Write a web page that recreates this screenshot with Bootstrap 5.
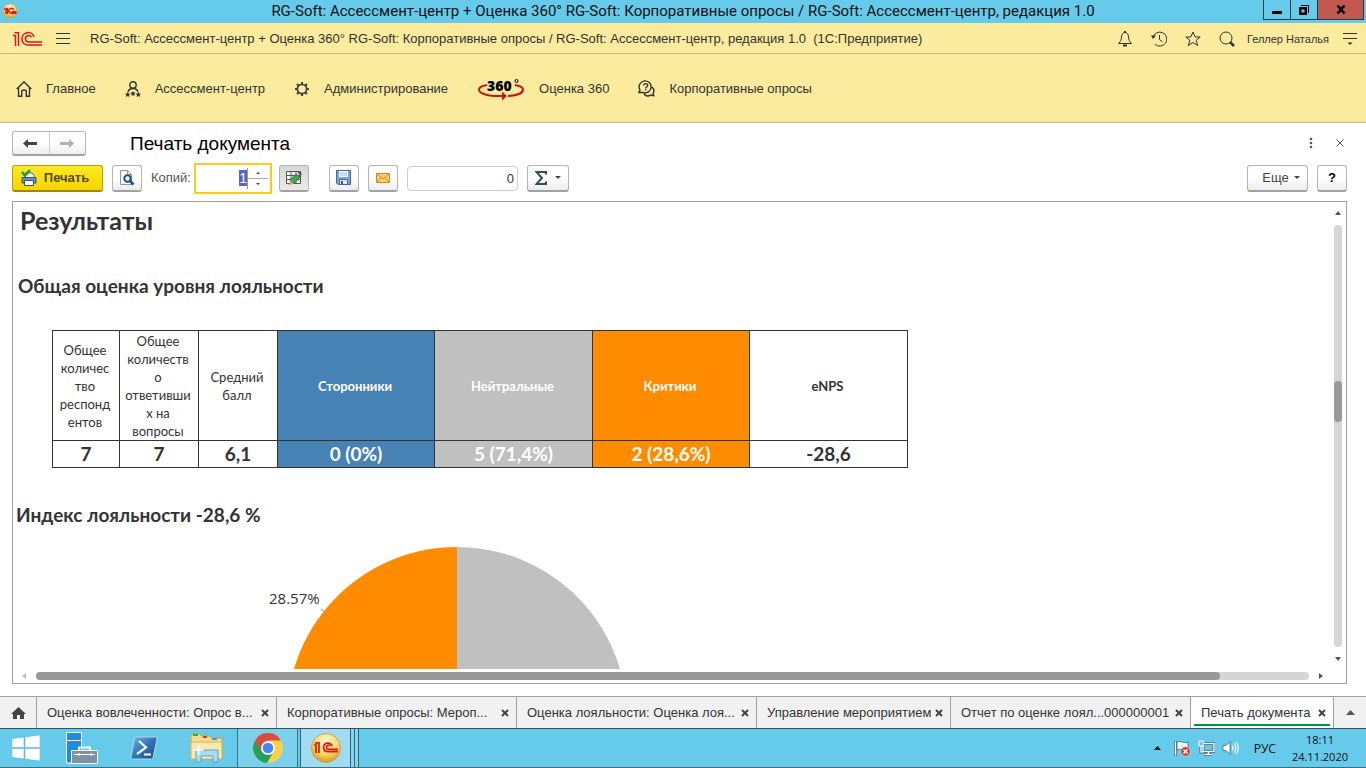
<!DOCTYPE html>
<html lang="ru">
<head>
<meta charset="utf-8">
<meta name="viewport" content="width=device-width, initial-scale=1">
<title>Печать документа</title>
<link href="https://cdn.jsdelivr.net/npm/bootstrap@5.3.0/dist/css/bootstrap.min.css" rel="stylesheet">
<style>
  body { font-family: "Liberation Sans", Arial, sans-serif; font-size: 13px; line-height: 16px; color: #333; background: #fff; }
  button { font: inherit; color: inherit; }
  svg { display: block; flex: none; }
  .plain { border: 0; background: none; padding: 0; }
  a { color: inherit; text-decoration: none; }

  .win-title { height: 23px; background: #66caea; color: #111; }
  .win-title h1 { font: 15px/23px Roboto, sans-serif; padding-left: 84px; }
  .win-ctl { height: 20px; margin-right: 2px; }
  .win-ctl button { border: 1px solid #1f3d47; border-top: 0; border-right: 0; background: none; padding: 0; width: 27px; display: flex; align-items: center; justify-content: center; }
  .win-ctl .close-win { width: 47px; background: #c35850; border-right: 1px solid #1f3d47; }

  .app-bar { height: 31px; background: #faeb9e; border-bottom: 1px solid #c8b972; padding: 1px 8px 0 13px; }
  .app-icons { gap: 18px; }
  .menu-btn { margin: 0 20px 0 13px; }
  .app-name { white-space: pre; }
  .user-name { font-size: 11px; margin: 0 13px 0 12px; }
  .sections { height: 69px; background: #faeb9e; border-bottom: 1px solid #c8b972; padding: 1px 16px 0; gap: 29px; }
  .sections a { display: flex; align-items: center; gap: 14px; }

  .form-head { padding: 8px 19px 0 12px; height: 34px; }
  .form-head h2 { font-size: 19px; line-height: 26px; color: #000; margin: 0 0 0 44px; }
  .form-tools { gap: 23px; padding: 6px 3px 0 0; }
  .btn-1c { height: 27px; min-width: 30px; padding: 0; border: 1px solid #b4b4b4; border-bottom: 2px solid #a2a2a2; border-radius: 3px; background: linear-gradient(#fff 50%, #ececec); display: flex; align-items: center; justify-content: center; color: #444; }
  .btn-print { width: 91px; gap: 7px; padding-right: 5px; border-color: #b89f00; border-bottom-color: #9d8800; background: linear-gradient(#ffe921, #f3d500); font-weight: bold; color: #54472a; }
  .btn-on { background: linear-gradient(#d6d6d6, #ebebeb); }
  .btn-sum { width: 42px; gap: 8px; }
  .btn-more { width: 61px; gap: 5px; padding-left: 7px; }
  .nav-pair { border: 1px solid #b4b4b4; border-bottom: 2px solid #a2a2a2; border-radius: 3px; height: 25px; width: 74px; background: linear-gradient(#fff 50%, #eee); display: flex; }
  .nav-pair button + button { border-left: 1px solid #ccc; }

  .tools { padding: 0 19px 2px 12px; height: 44px; }
  .tools > * { margin-right: 9px; }
  .tools > .last { margin-right: 0; }
  .tools > label { margin-right: 3px; color: #555; }
  .tools > .copies { width: 78px; height: 31px; border: 2px solid #fccb1f; padding-right: 2px; margin-right: 7px; }
  .copies input { border: 0; outline: 0; width: 51px; height: 27px; padding: 0; text-align: right; font-size: 14px; }
  .copies input::selection { background: #5469bd; color: #fff; }
  .spin { width: 21px; border-left: 1px solid #999; height: 21px; }
  .spin button { height: 10px; display: flex; align-items: center; justify-content: center; }
  .spin button:first-child { border-bottom: 1px solid #aaa; height: 11px; }
  .sum-box { width: 111px; height: 25px; border: 1px solid #ccc; border-radius: 4px; padding: 0 3px; text-align: right; color: #333; }
  .tools > .gap-wide { margin-right: 20px; }

  .sheet { border: 1px solid #a0a0a0; margin: 0 19px 12px 12px; min-height: 0; }
  .sheet-row { min-height: 0; }
  .sheet-body { min-width: 0; min-height: 0; overflow: hidden; font-family: Lato, Carlito, Calibri, sans-serif; }
  .sheet-body h3, .sheet-body h4 { font-weight: bold; color: #333; margin: 0; }
  .sheet-body h3 { font-size: 25px; line-height: 36px; padding-left: 7px; }
  .sheet-body h4 { font-size: 19px; line-height: 24px; }
  .h-total { padding: 36px 0 32px 5px; }
  .h-index { padding: 35px 0 20px 3px; }
  .nps { width: 856px; margin-left: 39px; table-layout: fixed; border-collapse: collapse; text-align: center; color: #333; }
  .nps th, .nps td { border: 1px solid #333; padding: 0; vertical-align: middle; }
  .nps th { height: 110px; font-size: 13px; line-height: 18px; padding-right: 2px; }
  .nps th.thin { font-weight: normal; }
  .nps td { height: 27px; font-size: 19px; line-height: 26px; font-weight: bold; }
  .nps .promo { background: #4682b4; color: #fff; }
  .nps .neutral { background: #c0c0c0; color: #fff; }
  .nps .critic { background: #ff8c00; color: #fff; }
  .c-first { width: 67px; }
  .c-thin { width: 79px; }
  .c-odd { width: 157px; }
  .c-even { width: 158px; }
  .pie { padding-left: 252px; }
  .pie text { font: 15px "Open Sans", sans-serif; fill: #333; }

  .vbar { width: 14px; padding: 9px 3px 0 0; }
  .hbar { height: 14px; padding: 3px 23px 0 9px; gap: 10px; }
  .track { background: #d5d5d5; border-radius: 4px; }
  .thumb { background: #999; border-radius: 4px; }
  .vbar .track { width: 8px; margin: 10px 0; }
  .vbar .thumb { height: 41px; }
  .hbar .track, .hbar .thumb { height: 8px; }

  .tabs { height: 32px; background: #f1f1f1; border-top: 1px solid #a0a0a0; }
  .tab, .tab-home { border-right: 1px solid #a0a0a0; }
  .tab { padding: 0 7px 0 10px; white-space: nowrap; min-width: 0; }
  .tab a { overflow: hidden; }
  .tab-wide { flex: 0 1 240px; }
  .tab-mid { flex: 0 1 194px; }
  .tab-home { width: 37px; }
  .tab-on { background: #fff; flex: 0 1 143px; }
  .tab-on::after { content: ""; position: absolute; left: 3px; right: 3px; bottom: 2px; height: 2px; background: #009646; }

  .taskbar { height: 40px; background: #66caea; border-top: 1px solid #3d4f56; border-bottom: 1px solid #3d6c7c; color: #111; }
  .taskbar .slot { width: 62px; display: flex; align-items: center; justify-content: center; }
  .taskbar .start { width: 51px; }
  .taskbar .run { width: 61px; border: solid #3b7488; border-width: 0 1px; background: #7bd1ec; margin-right: 2px; }
  .taskbar .act { width: 51px; border: solid #2e6375; border-width: 0 1px; background: #9fdcf1; }
  .stack { width: 4px; border-right: 1px solid #2e6375; background: #8ad5ee; }
  .tray { font: 11px/17px "Open Sans", sans-serif; padding-right: 18px; }
  .tray-icons { gap: 7px; margin-left: 13px; }
  .tray .lang { font-size: 12px; margin: 0 16px 0 15px; }
</style>
</head>
<body class="vh-100 d-flex flex-column overflow-hidden">

<header class="win-title d-flex flex-shrink-0">
  <svg width="19" height="22" viewBox="0 0 19 22"><defs><radialGradient id="gold" cx=".5" cy=".3" r=".7"><stop offset="0" stop-color="#fffbe0"/><stop offset=".6" stop-color="#fbd866"/><stop offset="1" stop-color="#d99720"/></radialGradient></defs><circle cx="10" cy="11" r="7" fill="url(#gold)" stroke="#c8a56a" stroke-width=".6"/><path d="M4 9.200h2V14M5.500 8.500h2V14M16.500 13.300h-5a2.500 2.500 0 1 1 2.300-3.300M16.500 11.800h-5" fill="none" stroke="#e3170d" stroke-width="1.400"/></svg>
  <h1 class="flex-fill text-center mb-0 text-truncate">RG-Soft: Ассессмент-центр + Оценка 360° RG-Soft: Корпоративные опросы / RG-Soft: Ассессмент-центр, редакция 1.0</h1>
  <div class="win-ctl d-flex">
    <button aria-label="Свернуть"><svg width="10" height="10"><path d="M0 6h10v3H0z"/></svg></button>
    <button aria-label="Восстановить"><svg width="10" height="10" fill="none" stroke="#000"><path d="M1.200 3.200h5.600v5.600H1.200z" stroke-width="2.400"/><path d="M2 .5h7.500V8"/></svg></button>
    <button class="close-win" aria-label="Закрыть"><svg width="10" height="9" viewBox="0 0 10 9"><path d="M1.500.5l7 8M8.500.5l-7 8" stroke="#000" stroke-width="2.600"/></svg></button>
  </div>
</header>

<div class="app-bar d-flex align-items-center flex-shrink-0">
  <svg width="30" height="16" viewBox="0 0 30 16" fill="none" stroke="#d61a1a" stroke-width="1.500"><path d="M0 4.500h2.500V15M1.500 1.700h4V15M29 14H15a6.200 6.200 0 1 1 6-8M29 11H15.500a3.200 3.200 0 1 1 3-4.500"/></svg>
  <button class="plain menu-btn" aria-label="Меню"><svg width="14" height="12" stroke="#333"><path d="M0 .5h14M0 5.500h14M0 10.500h14"/></svg></button>
  <span class="app-name flex-fill text-truncate">RG-Soft: Ассессмент-центр + Оценка 360° RG-Soft: Корпоративные опросы / RG-Soft: Ассессмент-центр, редакция 1.0  (1С:Предприятие)</span>
  <div class="app-icons d-flex align-items-center">
    <button class="plain" aria-label="Оповещения"><svg width="16" height="16" viewBox="0 0 16 16" fill="none" stroke="#333"><path d="M8 1.500c-2.200 0-3.300 1.500-3.500 4.500C4.300 9 3.500 10.500 1.500 12.500h13c-2-2-2.800-3.500-3-6.500C11.300 3 10.200 1.500 8 1.500z"/><path d="M6 14.500h4M7 1h2" stroke-width="2"/></svg></button>
    <button class="plain" aria-label="История"><svg width="16" height="16" viewBox="0 0 16 16" fill="none" stroke="#333"><path d="M2 6.500A7 7 0 1 1 4 13.200M8.500 4v4.500l3 2.500"/><path d="M0 4.500h5L2 8z" fill="#333" stroke="none"/></svg></button>
    <button class="plain" aria-label="Избранное"><svg width="16" height="16" viewBox="0 0 16 16" fill="none" stroke="#333"><path d="M8 1l2.200 5h5l-4 3.300 1.500 5.200L8 11.500l-4.700 3 1.500-5.200L.8 6h5z"/></svg></button>
    <button class="plain" aria-label="Поиск"><svg width="16" height="16" viewBox="0 0 16 16" fill="none" stroke="#333"><circle cx="7" cy="7" r="6"/><path d="M11 11l4 4" stroke-width="2.500"/></svg></button>
  </div>
  <a href="#" class="user-name">Геллер Наталья</a>
  <button class="plain" aria-label="Сервис"><svg width="16" height="15" viewBox="0 0 16 15" stroke="#333"><path d="M1 2.500h14M1 7.500h14"/><path d="M5.500 11.500h5L8 14z" fill="#333" stroke="none"/></svg></button>
</div>

<nav class="sections d-flex align-items-center flex-shrink-0">
  <a href="#"><svg width="16" height="16" viewBox="0 0 16 16" fill="none" stroke="#333" stroke-width="1.400"><path d="M.7 8L8 .9 15.300 8M2.500 6.500v8.800h3.200V10.500q0-1.500 2.300-1.500t2.300 1.500v4.800h3.200V6.500"/></svg>Главное</a>
  <a href="#"><svg width="16" height="16" viewBox="0 0 16 16" fill="none" stroke="#333" stroke-width="1.400"><circle cx="8" cy="4" r="3.200"/><path d="M3 11c.5-2.500 2.200-3.500 5-3.500s4.500 1 5 3.500"/><path id="st" d="M2.700 11l.8 1.600h1.900L4 13.900l.5 2-1.800-1-1.800 1 .5-2L0 12.600h1.900z" fill="#333" stroke="none"/><use href="#st" x="5.300" y="-1"/><use href="#st" x="10.600"/></svg>Ассессмент-центр</a>
  <a href="#"><svg width="16" height="16" viewBox="0 0 16 16" fill="none" stroke="#444"><circle cx="8" cy="8" r="4.600" stroke-width="1.800"/><path d="M8 1v2.500M8 12.500V15M1 8h2.500M12.500 8H15M3 3l2 2M11 11l2 2M3 13l2-2M11 5l2-2" stroke-width="2"/></svg>Администрирование</a>
  <a href="#"><svg width="48" height="24" viewBox="0 0 48 24"><path d="M10 8C4 9 2 10 2 12.500c0 4 9 7 24 6.500M38 8c6 1 8 2.500 8 4.500 0 3.500-6 6-15 6.500" fill="none" stroke="#c81414" stroke-width="2"/><path d="M25 14.500l5 4.500-5 4.500z" fill="#c81414"/><text x="10" y="14" font-family="Open Sans, sans-serif" font-weight="800" font-size="14" fill="#000">360</text><circle cx="39.500" cy="4" r="1.500" fill="none" stroke="#000"/></svg>Оценка 360</a>
  <a href="#"><svg width="17" height="17" viewBox="0 0 17 17" fill="none" stroke="#333" stroke-width="1.400"><path d="M1 12.500l1-2.500A6 6 0 1 1 5 12.500zM14 7c2 2 2.500 4.500 1 6.500l.8 2.200-3-.5C10 16.500 7.500 16 6 14"/><path d="M5.700 5.500c0-2.500 4-2.500 4 0 0 1.500-2 1.500-2 3M7.700 9.300v1.200"/></svg>Корпоративные опросы</a>
</nav>

<div class="form-head d-flex align-items-start flex-shrink-0">
  <div class="nav-pair">
    <button class="plain flex-fill d-flex align-items-center justify-content-center" aria-label="Назад"><svg width="15" height="9" viewBox="0 0 15 9"><path d="M0 4.500L5 0v3h9v3H5v3z" fill="#444"/></svg></button>
    <button class="plain flex-fill d-flex align-items-center justify-content-center" aria-label="Вперед"><svg width="15" height="9" viewBox="0 0 15 9"><path d="M14 4.500L9 0v3H0v3h9v3z" fill="#b0b0b0"/></svg></button>
  </div>
  <h2>Печать документа</h2>
  <div class="form-tools ms-auto d-flex align-items-center">
    <button class="plain" aria-label="Действия"><svg width="4" height="12" fill="#555"><circle cx="2" cy="2" r="1.300"/><circle cx="2" cy="6" r="1.300"/><circle cx="2" cy="10" r="1.300"/></svg></button>
    <button class="plain" aria-label="Закрыть"><svg width="8" height="8" viewBox="0 0 8 8" stroke="#555"><path d="M.5.5l7 7M7.500.5l-7 7"/></svg></button>
  </div>
</div>

<div class="tools d-flex align-items-center flex-shrink-0">
  <button class="btn-1c btn-print"><svg width="16" height="17" viewBox="0 0 16 17"><path d="M4 6V4h7l2 2v3H4z" fill="#fff" stroke="#47647e"/><path d="M1 8.500h14V14H1z" fill="#6e8dac" stroke="#3a5570"/><path d="M3.500 11.500h9v5h-9z" fill="#fff" stroke="#3a5570"/><path d="M1 3l3 3.500L9 1" fill="none" stroke="#17a326" stroke-width="2.600"/></svg>Печать</button>
  <button class="btn-1c" aria-label="Просмотр"><svg width="16" height="17" viewBox="0 0 16 17" fill="none"><path d="M1.500 1.500h7l4 4v10h-11z" fill="#fff" stroke="#8a97a5"/><path d="M8.500 1.500v4h4" stroke="#8a97a5"/><circle cx="8.500" cy="9.500" r="3.200" stroke="#18507f" stroke-width="2"/><path d="M11 12l3.500 3.500" stroke="#18507f" stroke-width="2.600"/></svg></button>
  <label for="copies">Копий:</label>
  <div class="copies d-flex align-items-center">
    <input id="copies" type="text" value="1">
    <div class="spin"><button class="plain w-100" aria-label="Больше"><svg width="4" height="2"><path d="M0 2l2-2 2 2z" fill="#444"/></svg></button><button class="plain w-100" aria-label="Меньше"><svg width="4" height="2"><path d="M0 0l2 2 2-2z" fill="#444"/></svg></button></div>
  </div>
  <button class="btn-1c btn-on gap-wide" aria-label="Редактирование"><svg width="17" height="16" viewBox="0 0 17 16"><path d="M1.500 1.500h14v12h-14z" fill="#fff" stroke="#555"/><path d="M1.500 5.500h14M1.500 9.500h14M6 1.500v12M11 1.500v12" stroke="#555"/><path d="M11 4l4 3-6 6.500-4-3z" fill="#3fae4b" stroke="#24712d"/><path d="M5 10l4 3.500L3.500 15.500z" fill="#d9a071"/><path d="M12.500 2.500l1.500-1L17 4l-1.500 2z" fill="#4a5560"/></svg></button>
  <button class="btn-1c" aria-label="Сохранить"><svg width="15" height="15" viewBox="0 0 15 15"><path d="M.5.5h14v14H2L.5 13z" fill="#7aa5d6" stroke="#3f6a9f"/><path d="M3 1h9v6H3z" fill="#fff"/><path d="M4 3h7M4 5h7" stroke="#9db4cc"/><path d="M3.500 9.500h8v5h-8z" fill="#dfe9f3" stroke="#3f6a9f"/><path d="M5 11h2v3H5z" fill="#34597f"/></svg></button>
  <button class="btn-1c" aria-label="Отправить"><svg width="14" height="10" viewBox="0 0 14 10" fill="none"><path d="M.5.5h13v9H.5z" fill="#f9cf72" stroke="#cc8d22"/><path d="M.5.5L7 6l6.500-5.500M.5 9.500l4.500-5M13.500 9.500L9 4.500" stroke="#cc8d22"/></svg></button>
  <input class="sum-box" type="text" value="0" aria-label="Сумма">
  <button class="btn-1c btn-sum" aria-label="Функция"><svg width="12" height="14" viewBox="0 0 12 14" fill="none" stroke="#34495e" stroke-width="2"><path d="M11 3.500V1H1.500l5.500 6-5.500 6H11v-2.500"/></svg><svg width="6" height="3"><path d="M0 0h6L3 3z" fill="#444"/></svg></button>
  <button class="btn-1c btn-more ms-auto"><span>Еще</span><svg width="6" height="3"><path d="M0 0h6L3 3z" fill="#444"/></svg></button>
  <button class="btn-1c last fw-bold text-black">?</button>
</div>

<main class="sheet flex-fill d-flex flex-column">
  <div class="sheet-row d-flex flex-fill">
    <div class="sheet-body flex-fill">
      <h3>Результаты</h3>
      <h4 class="h-total">Общая оценка уровня лояльности</h4>
      <table class="nps">
        <colgroup><col class="c-first"><col class="c-thin"><col class="c-thin"><col class="c-odd"><col class="c-even"><col class="c-odd"><col></colgroup>
        <thead><tr>
          <th class="thin">Общее<br>количес<br>тво<br>респонд<br>ентов</th>
          <th class="thin">Общее<br>количеств<br>о<br>ответивши<br>х на<br>вопросы</th>
          <th class="thin">Средний<br>балл</th>
          <th class="promo">Сторонники</th>
          <th class="neutral">Нейтральные</th>
          <th class="critic">Критики</th>
          <th>eNPS</th>
        </tr></thead>
        <tbody><tr><td>7</td><td>7</td><td>6,1</td><td class="promo">0 (0%)</td><td class="neutral">5 (71,4%)</td><td class="critic">2 (28,6%)</td><td>-28,6</td></tr></tbody>
      </table>
      <h4 class="h-index">Индекс лояльности -28,6 %</h4>
      <div class="pie">
        <svg width="370" height="340" viewBox="0 0 370 340">
          <path d="M192 0A170 170 0 1 1 26.300 207.900L192 170z" fill="#c0c0c0"/>
          <path d="M192 170V0A170 170 0 0 0 26.300 207.900z" fill="#ff8c00"/>
          <path d="M56 62l4 3" stroke="#888"/>
          <text x="4" y="57">28.57%</text>
        </svg>
      </div>
    </div>
    <div class="vbar d-flex flex-column align-items-center flex-shrink-0">
      <svg width="6" height="4"><path d="M0 4l3-4 3 4z" fill="#555"/></svg>
      <div class="track flex-fill"><div style="height:37%"></div><div class="thumb"></div></div>
      <svg width="6" height="4" class="mb-2"><path d="M0 0l3 4 3-4z" fill="#555"/></svg>
    </div>
  </div>
  <div class="hbar d-flex align-items-start flex-shrink-0">
    <svg width="4" height="8"><path d="M4 1v6L0 4z" fill="#bbb"/></svg>
    <div class="track flex-fill"><div class="thumb" style="width:93%"></div></div>
    <svg width="4" height="8"><path d="M0 1v6l4-3z" fill="#555"/></svg>
  </div>
</main>

<div class="tabs d-flex flex-shrink-0">
  <button class="tab-home border-top-0 border-bottom-0 border-start-0 bg-transparent p-0 d-flex align-items-center justify-content-center" aria-label="Начальная страница"><svg width="15" height="12" viewBox="0 0 15 12"><path d="M7.500 0L15 7h-2v5H9V8H6v4H2V7H0z" fill="#444"/></svg></button>
  <div class="tab tab-wide d-flex align-items-center justify-content-between"><a href="#">Оценка вовлеченности: Опрос в...</a><button class="plain" aria-label="Закрыть"><svg width="8" height="8"><path d="M1 1l6 6M7 1L1 7" stroke="#444" stroke-width="2"/></svg></button></div>
  <div class="tab tab-wide d-flex align-items-center justify-content-between"><a href="#">Корпоративные опросы: Мероп...</a><button class="plain" aria-label="Закрыть"><svg width="8" height="8"><path d="M1 1l6 6M7 1L1 7" stroke="#444" stroke-width="2"/></svg></button></div>
  <div class="tab tab-wide d-flex align-items-center justify-content-between"><a href="#">Оценка лояльности: Оценка лоя...</a><button class="plain" aria-label="Закрыть"><svg width="8" height="8"><path d="M1 1l6 6M7 1L1 7" stroke="#444" stroke-width="2"/></svg></button></div>
  <div class="tab tab-mid d-flex align-items-center justify-content-between"><a href="#">Управление мероприятием</a><button class="plain" aria-label="Закрыть"><svg width="8" height="8"><path d="M1 1l6 6M7 1L1 7" stroke="#444" stroke-width="2"/></svg></button></div>
  <div class="tab tab-wide d-flex align-items-center justify-content-between"><a href="#">Отчет по оценке лоял...000000001</a><button class="plain" aria-label="Закрыть"><svg width="8" height="8"><path d="M1 1l6 6M7 1L1 7" stroke="#444" stroke-width="2"/></svg></button></div>
  <div class="tab tab-on position-relative d-flex align-items-center justify-content-between"><a href="#">Печать документа</a><button class="plain" aria-label="Закрыть"><svg width="8" height="8"><path d="M1 1l6 6M7 1L1 7" stroke="#444" stroke-width="2"/></svg></button></div>
  <button class="plain flex-fill d-flex align-items-center justify-content-center" aria-label="Все окна"><svg width="9" height="5"><path d="M0 5l4.500-5L9 5z" fill="#555"/></svg></button>
</div>

<footer class="taskbar d-flex flex-shrink-0">
  <button class="plain slot start" aria-label="Пуск"><svg width="28" height="26" viewBox="0 0 28 26"><path d="M0 3.500L12 2v10.500H0zM13 1.900L28 0v12.500H13zM0 13.500h12V24L0 22.500zM13 13.500h15V26l-15-1.900z" fill="#fff" stroke="#4fa8c9" stroke-width=".5"/></svg></button>
  <button class="plain slot" aria-label="Диспетчер серверов"><svg width="32" height="32" viewBox="0 0 32 32"><path d="M.5.500h15V31H.5z" fill="#1f8ddb" stroke="#fff"/><path d="M1 8.500h14" stroke="#fff"/><path d="M13 18v-2.500h11V18" fill="none" stroke="#fff" stroke-width="2"/><path d="M5.500 18.500h26v13h-26z" fill="#7d93a5" stroke="#fff"/><path d="M8 22.500h21M13 21v3M25 21v3" stroke="#fff"/></svg></button>
  <button class="plain slot" aria-label="PowerShell"><svg width="28" height="24" viewBox="0 0 28 24"><defs><linearGradient id="ps" x2="1" y2="1"><stop offset="0" stop-color="#7fb7e4"/><stop offset=".5" stop-color="#2f73b5"/><stop offset="1" stop-color="#1d4c86"/></linearGradient></defs><path d="M5.500 1h21q1 0 .7 1L23 22q-.3 1-1.300 1H1.500q-1 0-.7-1L4.500 2q.2-1 1-1z" fill="url(#ps)" stroke="#b4d7ee"/><path d="M9 5l7 6.500L7 18M14 18.500h7" fill="none" stroke="#fff" stroke-width="2.200"/></svg></button>
  <button class="plain slot" aria-label="Проводник"><svg width="33" height="30" viewBox="0 0 33 30"><path d="M1 3V1h9l1.500 2H20l1.500 2H32v21H1z" fill="#f4dc8c" stroke="#c7a34a"/><path d="M3 1h5v2H3z" fill="#3aa83a"/><path d="M13 3h4v2h-4z" fill="#d8432a"/><path d="M22 5h5v2h-5z" fill="#3a9be0"/><path d="M1 9h31v17H1z" fill="#fae9ae" stroke="#d6b55e"/><path d="M6 29V17h22v12h-5v-6H11v6z" fill="#a8dcf3" stroke="#5da3c9"/><path d="M8.500 12v10M3.500 17h10" stroke="#fff" stroke-width="1.500"/></svg></button>
  <button class="slot run p-0" aria-label="Chrome"><svg width="30" height="30" viewBox="0 0 30 30"><circle cx="15" cy="15" r="15" fill="#fbd044"/><path d="M2 7.500A15 15 0 0 0 14 30l7-12-6-3-6 3z" fill="#26a05a"/><path d="M2 7.500A15 15 0 0 1 28 7.500H15L8.600 18.500z" fill="#dd4b3e"/><circle cx="15" cy="15" r="7" fill="#fff"/><circle cx="15" cy="15" r="5.300" fill="#4687f4"/></svg></button>
  <button class="slot act p-0" aria-label="1С:Предприятие"><svg width="30" height="30" viewBox="0 0 30 30"><circle cx="15" cy="15" r="14.500" fill="url(#gold)" stroke="#c9a357"/><path d="M3 12h2v8M4 9.800h4V20M27 18.700H17a4.300 4.300 0 1 1 4-5.500M27 16.300h-9.500a2 2 0 1 1 1.300-3.400" fill="none" stroke="#e3170d" stroke-width="1.700"/></svg></button>
  <span class="stack"></span><span class="stack"></span>
  <div class="tray ms-auto d-flex align-items-center">
    <svg width="7" height="4"><path d="M0 4l3.500-4L7 4z" fill="#111"/></svg>
    <div class="tray-icons d-flex align-items-center">
      <svg width="17" height="17" viewBox="0 0 17 17"><path d="M1.500 1v15" stroke="#41626e" stroke-width="3"/><path d="M1.500 1.500v14" stroke="#fff" stroke-width="1.500"/><path d="M3 2c4-2 6 2 11 0v8c-5 2-7-2-11 0z" fill="#e8f5fa" stroke="#41626e" stroke-width=".8"/><circle cx="11.500" cy="11.500" r="4.700" fill="#d9322a" stroke="#fff" stroke-width=".5"/><path d="M9.500 9.500l4 4M13.500 9.500l-4 4" stroke="#fff" stroke-width="1.600"/></svg>
      <svg width="17" height="16" viewBox="0 0 17 16" fill="none"><path d="M5 3.500h11v8H5zM10.500 11.500v3M6 14.500h8M3 6v6h2" stroke="#315967" stroke-width="2.800"/><path d="M5 3.500h11v8H5zM10.500 11.500v3M6 14.500h8M3 6v6h2" stroke="#fff" stroke-width="1.400"/><path d="M1 1h4.500v5H1z" fill="#66caea" stroke="#fff"/></svg>
      <svg width="17" height="16" viewBox="0 0 17 16" fill="none"><path d="M1 5.500h3l4-4v13l-4-4H1z" fill="#fff" stroke="#41626e" stroke-width=".8"/><path d="M10 5.500q2 2.500 0 5M12 3.500q3.500 4.500 0 9M14 2q4.500 6 0 12" stroke="#fff" stroke-width="1.200"/></svg>
    </div>
    <button class="plain lang">РУС</button>
    <div class="text-center">18:11<br>24.11.2020</div>
  </div>
</footer>

<script src="https://cdn.jsdelivr.net/npm/bootstrap@5.3.0/dist/js/bootstrap.bundle.min.js"></script>
<script>
  const copies = document.getElementById('copies');
  copies.focus();
  copies.select();
</script>
</body>
</html>
